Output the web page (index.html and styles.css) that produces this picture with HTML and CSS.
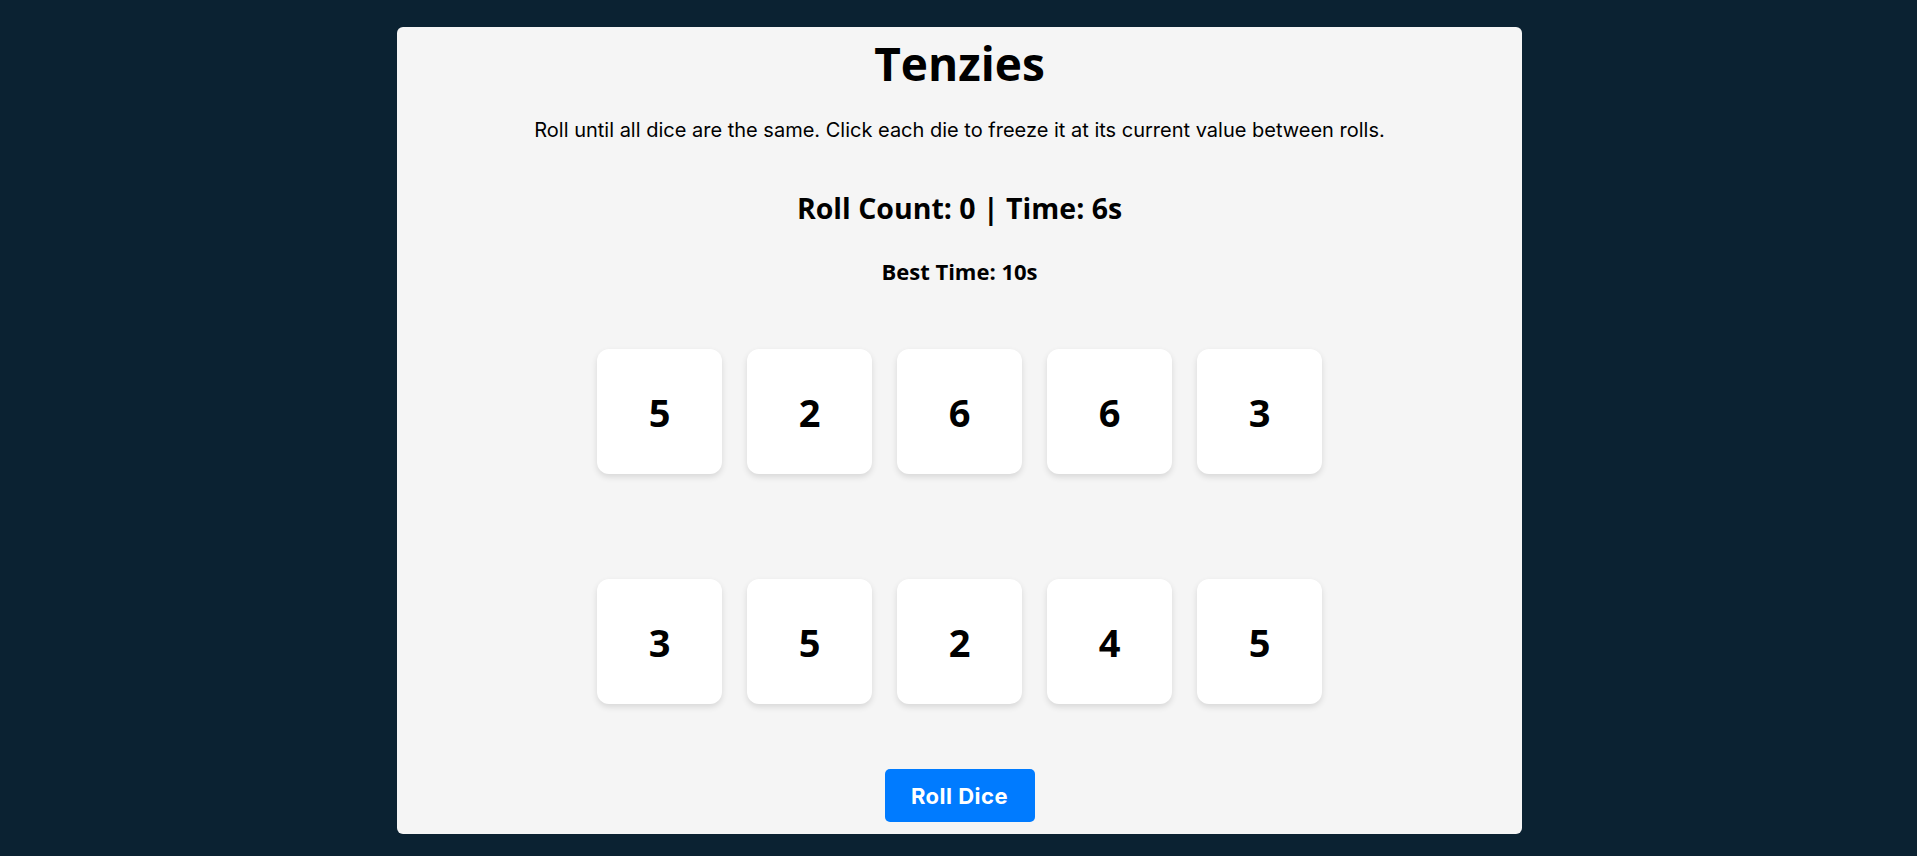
FILE: index.html
```html
<!DOCTYPE html>
<html lang="en">
<head>
<meta charset="utf-8">
<title>Tenzies</title>
<link rel="stylesheet" href="styles.css">
</head>
<body>
<main class="card">
  <h1 class="title">Tenzies</h1>
  <p class="instructions">Roll until all dice are the same. Click each die to freeze it at its current value between rolls.</p>
  <h2 class="stats">Roll Count: 0 | Time: 6s</h2>
  <h3 class="best">Best Time: 10s</h3>
  <div class="dice">
    <button class="die">5</button>
    <button class="die">2</button>
    <button class="die">6</button>
    <button class="die">6</button>
    <button class="die">3</button>
    <button class="die">3</button>
    <button class="die">5</button>
    <button class="die">2</button>
    <button class="die">4</button>
    <button class="die">5</button>
  </div>
  <button class="roll">Roll Dice</button>
</main>
</body>
</html>
```
FILE: styles.css
```css
* { box-sizing: border-box; }

body {
  margin: 0;
  min-height: 100vh;
  background: #0b2232;
  display: flex;
  justify-content: center;
  align-items: flex-start;
  padding: 27px 0 0 2px;
  font-family: "Open Sans", "Noto Sans", sans-serif;
}

.card {
  width: 1125px;
  background: #f5f5f5;
  border-radius: 6px;
  display: flex;
  flex-direction: column;
  align-items: center;
  padding: 4px 0 12px;
  color: #000;
}

.title {
  margin: 0;
  font-size: 46px;
  line-height: 64px;
  font-weight: 700;
}

.instructions {
  margin: 22.5px 0 0;
  font-family: Inter, sans-serif;
  font-size: 20px;
  line-height: 24px;
  font-weight: 400;
}

.stats {
  margin: 49.5px 0 0;
  font-size: 28.5px;
  line-height: 34px;
  font-weight: 700;
}

.best {
  margin: 32.5px 0 0;
  font-size: 22px;
  line-height: 26px;
  font-weight: 700;
}

.dice {
  margin-top: 65.5px;
  display: grid;
  grid-template-columns: repeat(5, 125px);
  grid-auto-rows: 125px;
  column-gap: 25px;
  row-gap: 105px;
}

.die {
  border: none;
  background: #fff;
  border-radius: 12px;
  box-shadow: 0 3px 6px rgba(0, 0, 0, 0.12);
  font-family: "Open Sans", "Noto Sans", sans-serif;
  font-size: 38px;
  font-weight: 700;
  color: #000;
  display: flex;
  align-items: center;
  justify-content: center;
  padding: 0;
  cursor: pointer;
}

.roll {
  margin-top: 65px;
  width: 150px;
  height: 53px;
  border: none;
  border-radius: 5px;
  background: #007bff;
  color: #fff;
  font-family: Inter, sans-serif;
  font-size: 22px;
  font-weight: 700;
  letter-spacing: 0.5px;
  cursor: pointer;
}
```
